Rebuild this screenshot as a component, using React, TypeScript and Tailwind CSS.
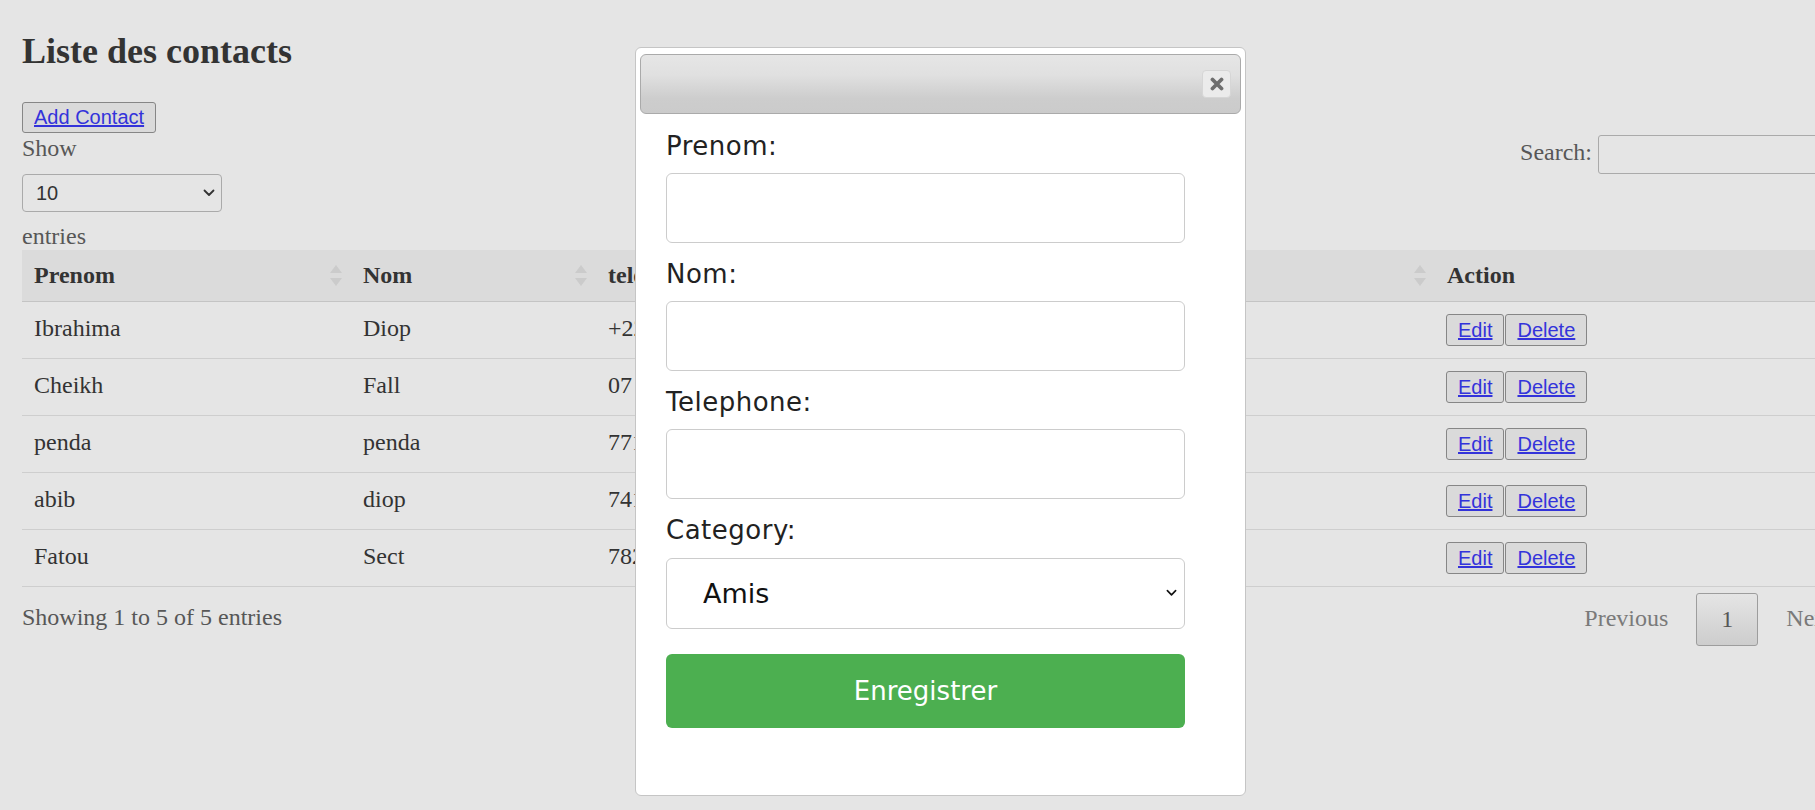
import { useState } from "react";

const contacts = [
  { prenom: "Ibrahima", nom: "Diop", tel: "+221 77 845 12 30", category: "Famille" },
  { prenom: "Cheikh", nom: "Fall", tel: "07 58 44 12 90", category: "Amis" },
  { prenom: "penda", nom: "penda", tel: "771234567", category: "Amis" },
  { prenom: "abib", nom: "diop", tel: "741258963", category: "Travail" },
  { prenom: "Fatou", nom: "Sect", tel: "782145698", category: "Famille" },
];

const SortIcon = () => (
  <svg width="12" height="21" viewBox="0 0 12 21" className="shrink-0">
    <polygon points="6,0 12,8 0,8" fill="#cbcbcb" />
    <polygon points="0,13 12,13 6,21" fill="#cbcbcb" />
  </svg>
);

const Chevron = ({ w, h, color }: { w: number; h: number; color: string }) => (
  <svg width={w} height={h} viewBox="0 0 12 8">
    <path d="M1.5 1.5 L6 6 L10.5 1.5" fill="none" stroke={color} strokeWidth="1.8" strokeLinecap="round" strokeLinejoin="round" />
  </svg>
);

const App = () => {
  const [category, setCategory] = useState("Amis");
  const [entries, setEntries] = useState("10");

  return (
    <div className="relative w-[1815px] h-[810px] overflow-hidden bg-[#e5e5e5] font-['Liberation_Serif',serif] text-[24px] text-[#333]">
      <div className="w-[1835px] ml-[22px]">
        <h2 className="pt-[31px] text-[36px] leading-[40px] font-bold text-[#333]">Liste des contacts</h2>

        <button className="mt-[31px] h-[31px] px-[11px] border border-[#868686] rounded-[3px] bg-[#dadada] font-['Liberation_Sans',Arial,sans-serif] text-[20px] leading-[23px] text-[#3333da] underline">
          Add Contact
        </button>

        <div className="flex justify-between">
          <div className="flex flex-col text-[#575757]">
            <span className="leading-[28px]">Show</span>
            <div className="relative mt-[12px] w-[200px] h-[38px]">
              <select
                value={entries}
                onChange={(e) => setEntries(e.target.value)}
                className="appearance-none w-full h-full pl-[13px] border border-[#aaaaaa] rounded-[4px] bg-transparent font-['Liberation_Sans',Arial,sans-serif] text-[20px] text-[#333] outline-none"
              >
                <option>10</option>
                <option>25</option>
                <option>50</option>
                <option>100</option>
              </select>
              <span className="pointer-events-none absolute right-[7px] top-[15px] flex">
                <Chevron w={12} h={8} color="#333" />
              </span>
            </div>
            <span className="mt-[11px] leading-[27px]">entries</span>
          </div>
          <div className="flex items-center h-[39px] mt-[1px] text-[#575757]">
            <span className="leading-[28px] pb-[6px]">Search:</span>
            <input className="ml-[6px] w-[259px] h-[39px] border border-[#aaaaaa] rounded-[3px] bg-transparent outline-none" />
          </div>
        </div>

        <div className="grid grid-cols-[329px_245px_300px_539px_422px]">
          {["Prenom", "Nom", "telephone", "Category"].map((h) => (
            <div key={h} className="h-[52px] flex items-center justify-between pl-[12px] pr-[9px] bg-[#dbdbdb] border-b border-[#c4c4c4] font-bold">
              <span className="pb-[2px]">{h}</span>
              <SortIcon />
            </div>
          ))}
          <div className="h-[52px] flex items-center pl-[12px] pb-[2px] bg-[#dbdbdb] border-b border-[#c4c4c4] font-bold">Action</div>

          {contacts.map((c) => (
            <div key={c.prenom} className="contents">
              <div className="h-[57px] flex items-center px-[12px] pb-[4px] border-b border-[#cecece]">{c.prenom}</div>
              <div className="h-[57px] flex items-center px-[12px] pb-[4px] border-b border-[#cecece]">{c.nom}</div>
              <div className="h-[57px] flex items-center px-[12px] pb-[4px] border-b border-[#cecece] whitespace-nowrap">{c.tel}</div>
              <div className="h-[57px] flex items-center px-[12px] pb-[4px] border-b border-[#cecece]">{c.category}</div>
              <div className="h-[57px] flex items-center gap-[1px] pl-[11px] border-b border-[#cecece] font-['Liberation_Sans',Arial,sans-serif] text-[20px]">
                <button className="h-[32px] px-[11px] border border-[#868686] rounded-[3px] bg-[#dadada] text-[#3333da] underline leading-[23px]">Edit</button>
                <button className="h-[32px] px-[11px] border border-[#868686] rounded-[3px] bg-[#dadada] text-[#3333da] underline leading-[23px]">Delete</button>
              </div>
            </div>
          ))}
        </div>

        <div className="flex items-center justify-between pt-[6px]">
          <span className="leading-[28px] pb-[5px] text-[#575757]">Showing 1 to 5 of 5 entries</span>
          <div className="flex items-center text-[#7a7a7a]">
            <span className="px-[24px] leading-[28px] pb-[4px]">Previous</span>
            <span className="ml-[4px] w-[62px] h-[53px] flex items-center justify-center pb-[2px] border border-[#9d9d9d] rounded-[3px] bg-[linear-gradient(to_bottom,#e5e5e5,#cdcdcd)] text-[#575757]">1</span>
            <span className="ml-[4px] px-[24px] leading-[28px] pb-[4px]">Next</span>
          </div>
        </div>
      </div>

      <div className="absolute left-[635px] top-[47px] w-[611px] h-[749px] bg-white border border-[#c5c5c5] rounded-[6px] pt-[6px] px-[4px] font-['DejaVu_Sans',Verdana,sans-serif] text-[#222]">
        <div className="relative h-[60px] border border-[#aaaaaa] rounded-[6px] bg-[linear-gradient(to_bottom,#e6e6e6_0%,#e0e0e0_35%,#cdcdcd_75%,#cbcbcb_100%)]">
          <button className="absolute right-[9px] top-[15px] w-[29px] h-[28px] flex items-center justify-center rounded-[4px] border border-[#d6d6d6] bg-[#ebebeb]">
            <svg width="14" height="14" viewBox="0 0 14 14">
              <path d="M2.5 2.5 L11.5 11.5 M11.5 2.5 L2.5 11.5" stroke="#6e6e6e" strokeWidth="3.8" strokeLinecap="round" />
            </svg>
          </button>
        </div>

        <form className="ml-[26px] w-[519px] flex flex-col text-[26px]" onSubmit={(e) => e.preventDefault()}>
          <label className="mt-[17px] leading-[30px] tracking-[0.5px]">Prenom:</label>
          <input className="mt-[12px] h-[70px] border border-[#cccccc] rounded-[6px] px-[18px] outline-none" />
          <label className="mt-[16px] leading-[30px] tracking-[0.5px]">Nom:</label>
          <input className="mt-[12px] h-[70px] border border-[#cccccc] rounded-[6px] px-[18px] outline-none" />
          <label className="mt-[16px] leading-[30px] tracking-[0.5px]">Telephone:</label>
          <input className="mt-[12px] h-[70px] border border-[#cccccc] rounded-[6px] px-[18px] outline-none" />
          <label className="mt-[16px] leading-[30px] tracking-[0.5px]">Category:</label>
          <div className="relative mt-[13px] h-[71px]">
            <select
              value={category}
              onChange={(e) => setCategory(e.target.value)}
              className="appearance-none w-full h-full pl-[36px] pt-[2px] border border-[#cccccc] rounded-[6px] bg-white text-[27px] text-[#111] outline-none"
            >
              <option>Amis</option>
              <option>Famille</option>
              <option>Travail</option>
            </select>
            <span className="pointer-events-none absolute right-[8px] top-[31px] flex">
              <Chevron w={11} h={8} color="#111" />
            </span>
          </div>
          <button type="submit" className="mt-[25px] h-[74px] rounded-[6px] bg-[#4caf50] text-white text-[26px]">
            Enregistrer
          </button>
        </form>
      </div>
    </div>
  );
};

export default App;
